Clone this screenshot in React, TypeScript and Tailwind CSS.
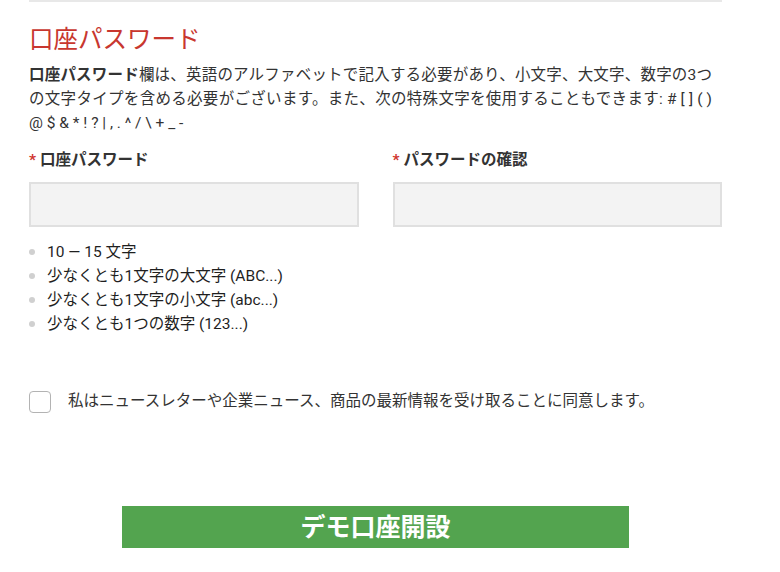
export default function App() {
  const rules = [
    '10 — 15 文字',
    '少なくとも1文字の大文字 (ABC...)',
    '少なくとも1文字の小文字 (abc...)',
    '少なくとも1つの数字 (123...)',
  ];

  return (
    <div className="w-[780px] h-[572px] overflow-hidden bg-white font-['Roboto','Noto_Sans_CJK_JP',sans-serif] text-[#333]">
      <div className="ml-[29px] w-[693px]">
        {/* divider */}
        <div className="h-[2px] bg-[#e8e8e8]"></div>

        <h2 className="mt-[22px] text-[24.5px] leading-[32px] font-normal text-[#c8372f]">口座パスワード</h2>

        <p className="mt-[7px] mr-[10px] text-[15.5px] leading-[24px] text-justify text-[#333]">
          <span className="font-bold">口座パスワード</span>欄は、英語のアルファベットで記入する必要があり、小文字、大文字、数字の3つの文字タイプを含める必要がございます。また、次の特殊文字を使用することもできます: # [ ] ( ) @ $ &amp; * ! ? | , . ^ / \ + _ -
        </p>

        {/* password fields */}
        <div className="mt-[13px] grid grid-cols-2 gap-[34px]">
          <div>
            <label className="block text-[15.5px] leading-[24px] font-bold text-[#333]">
              <span className="text-[#d0352f] mr-[4px]">*</span>口座パスワード
            </label>
            <input type="password" className="mt-[10px] block w-full h-[45px] bg-[#f3f3f3] border-2 border-[#e0e0e0] outline-none" />
          </div>
          <div>
            <label className="block text-[15.5px] leading-[24px] font-bold text-[#333]">
              <span className="text-[#d0352f] mr-[4px]">*</span>パスワードの確認
            </label>
            <input type="password" className="mt-[10px] block w-full h-[45px] bg-[#f3f3f3] border-2 border-[#e0e0e0] outline-none" />
          </div>
        </div>

        <ul className="mt-[13px]">
          {rules.map((r) => (
            <li key={r} className="flex items-center gap-[12px] text-[15.5px] leading-[24px] text-[#1f1f1f]">
              <span className="w-[6px] h-[6px] rounded-full bg-[#d0d0d0] shrink-0"></span>
              {r}
            </li>
          ))}
        </ul>

        {/* newsletter */}
        <label className="mt-[55px] flex items-center gap-[17px]">
          <span className="w-[22px] h-[22px] rounded-[4px] border-[1.5px] border-[#b3b3b3] bg-white shrink-0"></span>
          <span className="text-[15.5px] leading-[20px] text-[#333] -mt-[3px]">私はニュースレターや企業ニュース、商品の最新情報を受け取ることに同意します。</span>
        </label>

        <div className="mt-[93px] flex justify-center">
          <button className="w-[507px] h-[42px] bg-[#53a44f] text-white text-[25px] font-bold leading-none">
            デモ口座開設
          </button>
        </div>
      </div>
    </div>
  );
}
